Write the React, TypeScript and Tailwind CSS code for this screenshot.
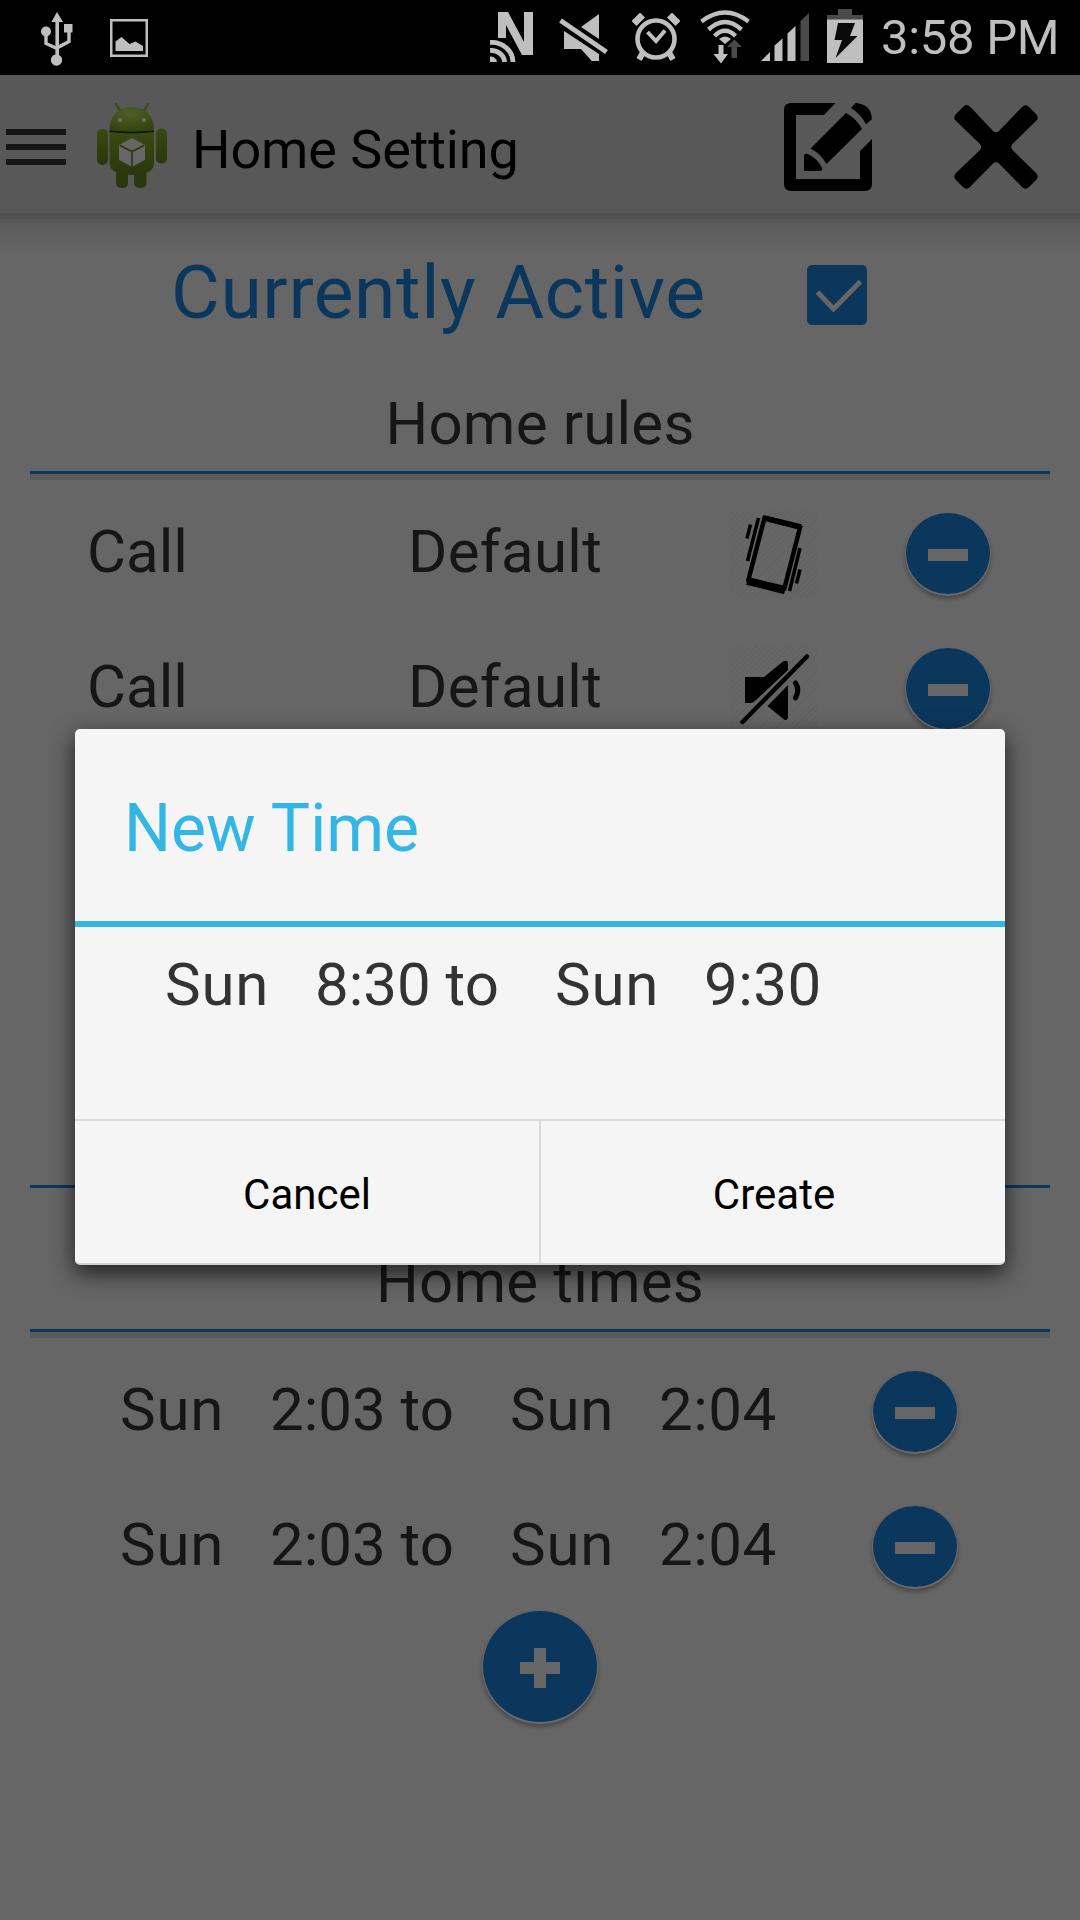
import React from "react";

function UsbIcon() {
  return (
    <svg width="32" height="54" viewBox="0 0 32 54" fill="#bfbfbf">
      <path d="M16 0l6 10h-4v38h-3.600V10h-4z" />
      <circle cx="15.500" cy="48" r="5.700" />
      <circle cx="5" cy="19.500" r="5" />
      <rect x="23" y="12" width="8.500" height="8.500" />
      <path d="M5 20v11.500l11 5M28 19v10.500l-12 6.500" fill="none" stroke="#bfbfbf" strokeWidth="3.400" />
    </svg>
  );
}

function PictureIcon() {
  return (
    <svg width="38" height="38" viewBox="0 0 38 38" fill="#bfbfbf">
      <rect x="1.250" y="1.250" width="35.500" height="35.500" fill="none" stroke="#bfbfbf" strokeWidth="2.500" />
      <path d="M5.500 32V22.500l6-4.500 8 7 6-2.500 7.500 4.500v5z" />
    </svg>
  );
}

function NfcIcon() {
  return (
    <svg width="43" height="50" viewBox="0 0 43 50" fill="#bfbfbf">
      <path d="M8 0h10l16 30V0h9v43h-11L16 13v13H8z" />
      <path d="M0 30.500A21.500 19.500 0 0 1 23 50M0 38.500A13.500 11.500 0 0 1 14.500 50" fill="none" stroke="#bfbfbf" strokeWidth="4.800" />
      <path d="M0 44.500q6 0 7 5.500H0z" />
    </svg>
  );
}

function MuteIcon() {
  return (
    <svg width="49" height="47" viewBox="0 0 49 47" fill="#bfbfbf">
      <path d="M40 0v25L22 13zM5 17l35 23v15L22 35H5z" />
      <path d="M1 6.500l46 31.500" stroke="#000" strokeWidth="10" />
      <path d="M1.500 6.500l46 31.500" stroke="#bfbfbf" strokeWidth="4.800" />
    </svg>
  );
}

function AlarmIcon() {
  return (
    <svg width="48" height="48" viewBox="0 0 48 48" fill="none" stroke="#bfbfbf">
      <circle cx="24" cy="26" r="18.500" strokeWidth="4.600" />
      <path d="M15.500 19l8.500 9 9-10.500" strokeWidth="4" />
      <path d="M2 10.500L10.500 2M46 10.500L37.500 2" strokeWidth="7" />
      <path d="M11 39.500l-4 7M37 39.500l4 7" strokeWidth="6" />
    </svg>
  );
}

function WifiIcon() {
  return (
    <svg width="50" height="54" viewBox="0 0 50 54" fill="none" stroke="#bfbfbf" strokeWidth="4.400">
      <path d="M1.500 11.500Q25-6.500 48.500 11.500" />
      <path d="M8.500 19.500Q25 4.500 41.500 19.500" />
      <path d="M14.500 26Q25 15.500 35.500 26" />
      <path d="M19 29q6-5 12 0l-6 5z" fill="#bfbfbf" stroke="none" />
      <path d="M18.500 35h5v9h4.500l-7 9.500-7.500-9.500h5z" fill="#bfbfbf" stroke="none" />
      <path d="M31.500 48v-11H27l7.500-7.500L42 37h-5v11z" fill="#4a4a4a" stroke="none" />
    </svg>
  );
}

function SignalIcon() {
  return (
    <svg width="48" height="48" viewBox="0 0 48 48" fill="#bfbfbf">
      <path d="M0 48l9-9v9zM13.500 48V32.500l8-7V48zM26.500 48V20.500l8-7.500v35z" />
      <path d="M39.500 48V8L48 0v48z" fill="#4a4a4a" />
    </svg>
  );
}

function BatteryIcon() {
  return (
    <svg width="36" height="54" viewBox="0 0 36 54">
      <path d="M11 0h14v6h11v5H0V6h11z" fill="#4a4a4a" />
      <path d="M0 10.500h36V54H0z" fill="#bfbfbf" />
      <path d="M11 14h17l-5 13h7.500L8.500 49l6.500-18H7.500z" fill="#0a0a0a" />
    </svg>
  );
}

function AndroidIcon() {
  return (
    <svg width="72" height="86" viewBox="0 0 72 86">
      <defs>
        <linearGradient id="body" x1="0" y1="0" x2="0" y2="1">
          <stop offset="0" stopColor="#3a4a12" />
          <stop offset="1" stopColor="#2b370c" />
        </linearGradient>
        <radialGradient id="head" cx="0.450" cy="0.250" r="0.700">
          <stop offset="0" stopColor="#505f2a" />
          <stop offset="0.500" stopColor="#425217" />
          <stop offset="1" stopColor="#364510" />
        </radialGradient>
      </defs>
      <path d="M20 1l5 8M52 1l-5 8" stroke="#3c4c16" strokeWidth="2.400" strokeLinecap="round" />
      <path d="M13.500 27C13.500 13 23 4 36 4s22 9 22 23q-22 4-44.500 0z" fill="url(#head)" />
      <circle cx="24" cy="17" r="2.100" fill="#6c6c6c" />
      <circle cx="48" cy="17" r="2.100" fill="#6c6c6c" />
      <rect x="20" y="66" width="12" height="19" rx="5" fill="#2b370c" />
      <rect x="38" y="66" width="12.500" height="19" rx="5" fill="#2b370c" />
      <rect x="1" y="26" width="11" height="36" rx="5" fill="url(#body)" />
      <rect x="60" y="25.500" width="11" height="35" rx="5" fill="url(#body)" />
      <path d="M13.500 28q22.500 4 44.500 0v32q0 12-22 12t-22.500-12z" fill="url(#body)" />
      <path d="M13.500 28q22.500 3 44.500 0" stroke="#0d1204" strokeWidth="1.500" fill="none" />
      <path d="M36 35l13 7v15l-13 7-13-7V42z" fill="#666" />
      <path d="M24 42.500l12 6 12-6M36 48.500V64" stroke="#2c380f" strokeWidth="1.600" fill="none" />
    </svg>
  );
}

function EditIcon() {
  return (
    <svg width="88" height="88" viewBox="0 0 88 88">
      <path d="M51.500 0L40 12H12v64h64V48l12-12v45q0 7-7 7H7q-7 0-7-7V7q0-7 7-7z" />
      <path d="M62 10q11 6 16 16L42.500 61Q37 51 26.500 45.500z" />
      <path d="M67 5l4.500-5Q87 1 88 16l-6 5.500Q77 11 67 5z" />
      <path d="M20 68V52q1-2 4-1 10 5 14 14 .5 3-2 3z" />
    </svg>
  );
}

function CloseIcon() {
  return (
    <svg width="84" height="84" viewBox="0 0 84 84">
      <path d="M12.500 0q2 0 4 2L39 26q3 2.500 6 0L68 2q3.500-3.500 7 0l7 7q3.500 3.500 0 7L58.500 39q-2.500 3 0 6L82 68q3.500 3.500 0 7l-7 7q-3.500 3.500-7 0L45 58.500q-3-2.500-6 0L16 82q-3.500 3.500-7 0l-7-7q-3.500-3.500 0-7l24-23q2.500-3 0-6L2 16q-3.500-3.500 0-7l7-7q1.500-2 3.500-2z" />
    </svg>
  );
}

function VibrateIcon() {
  return (
    <svg width="88" height="88" viewBox="0 0 88 88" fill="none" stroke="#000">
      <path d="M34.500 8L70 17.500 54.500 78 18.500 69.500z" strokeWidth="4.500" />
      <path d="M34 8l37 9" strokeWidth="5.500" />
      <path d="M17 71l38 9.500" strokeWidth="7.500" />
      <path d="M28.500 8L17.500 51M20.500 14.500l-3.500 14M70 38L59.500 81M70 59.500l-3.500 14" strokeWidth="3.500" />
    </svg>
  );
}

function SilentIcon() {
  return (
    <svg width="88" height="88" viewBox="0 0 88 88">
      <path d="M15 32h19l19-15.500q5-2 5 2V25L25 56q-2 2-5 2h-5z" />
      <path d="M58 40v33q-1 3-4 1.500L37.500 61z" />
      <path d="M12.500 77L77 11.500" stroke="#000" strokeWidth="4.500" strokeLinecap="round" />
      <path d="M65.500 38q4.500 6.500 0 15" stroke="#000" strokeWidth="5" fill="none" strokeLinecap="round" />
    </svg>
  );
}

function RemoveButton() {
  return (
    <button className="flex h-[81px] w-[84px] shrink-0 items-center justify-center rounded-[50%] bg-[#0c375d] shadow-[0_1px_0_1px_#6a6a6a,0_4px_4px_1px_rgba(0,0,0,0.3)]">
      <span className="mt-[3px] h-3 w-10 bg-[#666]" />
    </button>
  );
}

function RuleRow({ icon }: { icon: React.ReactNode }) {
  return (
    <div className="flex h-[135px] items-center pl-[87px]">
      <span className="w-[321px] pb-[3px]">Call</span>
      <span className="w-[322px] pb-[3px] tracking-[0.3px]">Default</span>
      <div className="mr-[88px] bg-[repeating-linear-gradient(135deg,#666_0px,#666_3px,#626262_3px,#626262_4px)]">{icon}</div>
      <RemoveButton />
    </div>
  );
}

function TimeRange({ from, to }: { from: string; to: string }) {
  return (
    <>
      <span className="w-[150px] pb-[3px] tracking-[0.8px]">Sun</span>
      <span className="w-[240px] pb-[3px]">{from} to</span>
      <span className="w-[149px] pb-[3px] tracking-[0.8px]">Sun</span>
      <span className="w-[214px] pb-[3px] tracking-[0.5px]">{to}</span>
    </>
  );
}

function TimeRow() {
  return (
    <div className="flex h-[135px] items-center pl-[120px]">
      <TimeRange from="2:03" to="2:04" />
      <RemoveButton />
    </div>
  );
}

function Heading({ children }: { children: React.ReactNode }) {
  return (
    <h2 className="mx-[30px] flex h-[111px] items-end justify-center border-b-[3px] border-[#0c375d] pb-[12px] text-[60px] leading-[70px] tracking-[0.200px] shadow-[0_6px_0_#5b5b5b]">
      {children}
    </h2>
  );
}

export default function App() {
  return (
    <div className="relative flex h-[1920px] w-[1080px] flex-col overflow-hidden bg-[#666] font-['Roboto',sans-serif] text-[#161616]">
      <div className="flex h-[75px] shrink-0 items-start bg-black text-[#bfbfbf]">
        <div className="flex pl-[41px] pt-3">
          <UsbIcon />
          <div className="ml-[37px] mt-[7px]"><PictureIcon /></div>
        </div>
        <div className="ml-[342px] mt-3"><NfcIcon /></div>
        <div className="ml-[26px] mt-[14px]"><MuteIcon /></div>
        <div className="ml-[24px] mt-[13px]"><AlarmIcon /></div>
        <div className="ml-5 mt-[10px]"><WifiIcon /></div>
        <div className="ml-[11px] mt-[13px]"><SignalIcon /></div>
        <div className="ml-[18px] mt-[9px]"><BatteryIcon /></div>
        <span className="ml-[18px] mt-[9px] whitespace-nowrap text-[49px] leading-[58px] tracking-[-0.3px]">3:58 PM</span>
      </div>

      <header className="flex h-[138px] shrink-0 items-center bg-[#585858] pl-[6px] text-black">
        <div className="flex w-[60px] flex-col gap-[9px] pt-[5px]">
          <span className="h-1.5 bg-[#161616]" />
          <span className="h-1.5 bg-[#161616]" />
          <span className="h-1.5 bg-[#161616]" />
        </div>
        <div className="ml-[30px] mt-[4px]"><AndroidIcon /></div>
        <h1 className="ml-[24px] mt-[12px] w-[592px] whitespace-nowrap text-[54px] leading-[64px] tracking-[-0.1px]">Home Setting</h1>
        <div className="mt-[6px]"><EditIcon /></div>
        <div className="ml-[82px] mt-[6px]"><CloseIcon /></div>
      </header>
      <div className="h-[6px] shrink-0 bg-[#515151]" />
      <div className="h-[3px] shrink-0 bg-[#575757]" />
      <div className="h-[33px] shrink-0 bg-linear-to-b from-[#5b5b5b] to-[#666]" />

      <div className="flex h-[114px] shrink-0 items-start pl-[171px]">
        <span className="mt-[-7px] w-[636px] whitespace-nowrap text-[75px] leading-[88px] tracking-[0.6px] text-[#0c375d]">Currently Active</span>
        <div className="mt-[10px] size-[60px] rounded-[5px] bg-[#0c375d]">
          <svg width="60" height="60" viewBox="0 0 60 60" fill="none" stroke="#666" strokeWidth="5">
            <path d="M10.500 27l16 17L53.500 16.500" />
          </svg>
        </div>
      </div>

      <section className="shrink-0 text-[60px] leading-[70px]">
        <div className="-mt-[6px]"><Heading>Home rules</Heading></div>
        <div className="h-[711px] pt-[12px]">
          <RuleRow icon={<VibrateIcon />} />
          <RuleRow icon={<SilentIcon />} />
        </div>
        <div className="mx-[30px] h-[3px] bg-[#0c375d]" />
        <div className="mt-[33px]"><Heading>Home times</Heading></div>
        <div className="pt-[12px]">
          <TimeRow />
          <TimeRow />
        </div>
        <div className="flex justify-center">
          <button className="-mt-[3px] flex h-[111px] w-[114px] items-center justify-center rounded-[50%] bg-[#0c375d] shadow-[0_1px_0_1px_#6a6a6a,0_4px_4px_1px_rgba(0,0,0,0.3)]">
            <svg className="mt-[3px]" width="40" height="40" viewBox="0 0 40 40" fill="#666">
              <path d="M14 0h12v14h14v12H26v14H14V26H0V14h14z" />
            </svg>
          </button>
        </div>
      </section>

      <div className="absolute left-[75px] top-[729px] flex h-[536px] w-[930px] flex-col overflow-hidden rounded-[5px] border-b-2 border-[#d0d0d0] bg-[#f5f5f5] shadow-[0_8px_22px_1px_rgba(0,0,0,0.65)]">
        <div className="flex h-[198px] items-center border-b-[6px] border-[#33b5e5] pl-[49px] text-[66px] leading-[76px] text-[#33b5e5]">
          <span className="mt-2">New Time</span>
        </div>
        <div className="flex h-[192px] items-start pl-[90px] pt-[23px] text-[60px] leading-[70px] text-[#333]">
          <TimeRange from="8:30" to="9:30" />
        </div>
        <div className="flex grow border-t-2 border-[#dadada] text-[42px] text-black">
          <button className="w-[466px] border-r-2 border-[#dadada] pt-1">Cancel</button>
          <button className="grow pl-[2px] pt-1">Create</button>
        </div>
      </div>
    </div>
  );
}
